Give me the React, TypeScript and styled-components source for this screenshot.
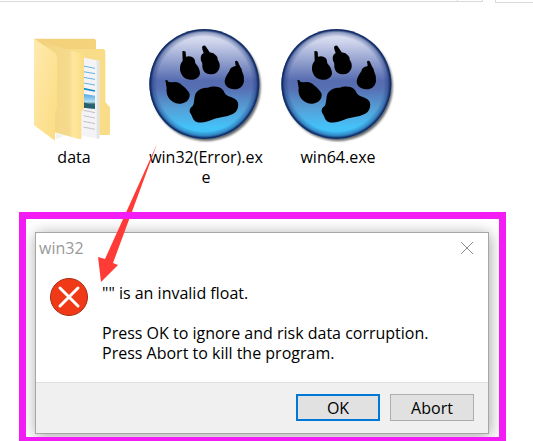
import React from "react";
import styled, { createGlobalStyle } from "styled-components";

const GlobalStyle = createGlobalStyle`
  * { box-sizing: border-box; }
  body {
    margin: 0;
    background: #fff;
    color: #000;
    font-family: "Open Sans", "Noto Sans", sans-serif;
    font-size: 16px;
    line-height: 20px;
    overflow: hidden;
  }
`;

const Page = styled.main`
  position: relative;
`;

const Toolbar = styled.header`
  display: flex;
  align-items: flex-start;
  gap: 12px;
`;

const AddressBox = styled.div`
  display: flex;
  justify-content: flex-end;
  flex: 1;
  height: 2px;
  border: solid #d9d9d9;
  border-width: 0 1px 1px 0;
`;

const AddressDivider = styled.div`
  width: 25px;
  border-left: 1px solid #d9d9d9;
`;

const SearchBox = styled.div`
  width: 38px;
  height: 3px;
  border: solid #d9d9d9;
  border-width: 0 0 1px 1px;
`;

const Files = styled.ul`
  display: grid;
  grid-template-columns: repeat(auto-fill, 132px);
  margin: 0;
  padding: 23px 8px 25px;
  list-style: none;
`;

const FileItem = styled.li`
  display: flex;
  flex-direction: column;
  align-items: center;
  gap: 3px;
`;

const FileIcon = styled.svg`
  width: 118px;
  height: 118px;
`;

const FileName = styled.span`
  width: 114px;
  text-align: center;
  word-break: break-all;
`;

const Highlight = styled.section`
  position: relative;
  margin: 0 27px 0 19px;
  padding: 20px 17px 7px 16px;

  &::after {
    content: "";
    position: absolute;
    inset: 0;
    z-index: 2;
    border: solid #f41cf4;
    border-width: 7px 7px 4px;
    pointer-events: none;
  }
`;

const Dialog = styled.div`
  border: 1px solid #a6a6a6;
  background: #fff;
  box-shadow: 1px 2px 14px rgba(0, 0, 0, 0.36);
  clip-path: inset(-13px -10px -3px -9px);
`;

const TitleBar = styled.div`
  display: flex;
  align-items: center;
  justify-content: space-between;
  height: 30px;
  padding: 0 14px 0 3px;
`;

const Title = styled.h1`
  margin: 0;
  color: #999;
  font-size: 16px;
  font-weight: 400;
`;

const CloseButton = styled.button`
  display: flex;
  padding: 0;
  border: 0;
  background: none;
`;

const Message = styled.div`
  display: flex;
  align-items: flex-start;
  gap: 13px;
  padding: 14px 13px 19px;
`;

const MessageText = styled.div`
  display: grid;
  gap: 20px;
  padding-top: 6px;
`;

const Paragraph = styled.p`
  margin: 0;
`;

const Actions = styled.footer`
  display: flex;
  justify-content: flex-end;
  gap: 10px;
  padding: 11px 14px 12px;
  border-top: 1px solid #dfdfdf;
  background: #f0f0f0;
`;

const ActionButton = styled.button<{ $primary?: boolean }>`
  width: 84px;
  height: 27px;
  padding: 0;
  border: ${(p) => (p.$primary ? "2px solid #0078d7" : "1px solid #adadad")};
  background: #e1e1e1;
  color: #000;
  font: inherit;
`;

const Pointer = styled.svg`
  position: absolute;
  top: 140px;
  left: 90px;
  z-index: 1;
  pointer-events: none;
`;

const FolderIcon = () => (
  <FileIcon viewBox="-15 18 354 354" aria-hidden="true">
    <defs>
      <linearGradient id="folderFront" x1="0" y1="0" x2="1" y2="1">
        <stop offset="0" stopColor="#ffeab0" />
        <stop offset="1" stopColor="#fbdc80" />
      </linearGradient>
      <linearGradient id="folderInner" x1="0" y1="0" x2="1" y2="0">
        <stop offset="0" stopColor="#f3d582" />
        <stop offset="0.62" stopColor="#f6da8d" />
        <stop offset="0.72" stopColor="#ffe79f" />
        <stop offset="1" stopColor="#fbdc85" />
      </linearGradient>
      <linearGradient id="photo" x1="0" y1="0" x2="0" y2="1">
        <stop offset="0" stopColor="#4aa5e2" />
        <stop offset="0.55" stopColor="#b9e1f4" />
        <stop offset="0.7" stopColor="#2f6470" />
        <stop offset="1" stopColor="#3d86ba" />
      </linearGradient>
    </defs>
    <path d="M42 56H222Q228 57 228 63V340L110 322L42 312Z" fill="#f3d27b" />
    <path d="M98 87H249Q256 88 256 95V246L270 262V341Q270 345 265 345H130Z" fill="#f9dc88" />
    <path d="M172 109L238 122V357L172 344Z" fill="#f4f4f6" />
    <path d="M238 122V357L230 355V121Z" fill="#e2e3e7" />
    <g fill="none" stroke="#62b4df" strokeWidth="3">
      <path d="M190 138L225 145M190 155L225 161M190 172L225 178M190 189L225 195" />
      <path d="M190 206L225 213" stroke="#168bc7" strokeWidth="5" />
    </g>
    <path d="M188 221L225 227V266L188 263Z" fill="url(#photo)" />
    <path d="M188 246L225 258V266L188 263Z" fill="#28606d" />
    <path d="M190 271L225 278M190 287L225 294M190 304L225 311M190 321L225 328" stroke="#bfc2c6" strokeWidth="3" />
    <path d="M107 340L132 347L108 357Z" fill="#f1f1f1" />
    <path d="M76 69L186 101Q192 103 192 108V265Q184 272 184 280V353Q183 359 176 357L76 329Z" fill="url(#folderInner)" />
    <path d="M42 56L106 99Q111 103 111 109V267Q105 274 105 282V362L44 317Q42 315 42 312Z" fill="url(#folderFront)" />
  </FileIcon>
);

const PawIcon = ({ id }: { id: string }) => (
  <FileIcon viewBox="21 18 354 354" aria-hidden="true">
    <defs>
      <linearGradient id={`${id}-fill`} x1="0" y1="0" x2="0" y2="1">
        <stop offset="0" stopColor="#e6e9f6" />
        <stop offset="0.12" stopColor="#cdd3eb" />
        <stop offset="0.47" stopColor="#566cb0" />
        <stop offset="0.54" stopColor="#566fb2" />
        <stop offset="0.72" stopColor="#559fd6" />
        <stop offset="0.9" stopColor="#43c3fa" />
        <stop offset="1" stopColor="#3fb9f4" />
      </linearGradient>
      <radialGradient id={`${id}-rim`}>
        <stop offset="0.86" stopColor="#173477" stopOpacity="0" />
        <stop offset="0.94" stopColor="#173477" stopOpacity="0.4" />
        <stop offset="0.98" stopColor="#132c66" />
        <stop offset="1" stopColor="#173066" />
      </radialGradient>
      <filter id={`${id}-shadow`}>
        <feGaussianBlur stdDeviation="3" />
      </filter>
    </defs>
    <circle cx="198" cy="199" r="164" fill="#000" opacity="0.6" filter={`url(#${id}-shadow)`} />
    <circle cx="193" cy="192" r="165" fill={`url(#${id}-fill)`} />
    <circle cx="193" cy="192" r="165" fill={`url(#${id}-rim)`} />
    <path d="M127 94Q132 91 137 95L138 110Q152 106 161 114Q166 119 166 130Q180 145 180 161C177 174 164 180 150 179C133 179 121 164 120 148C119 135 124 127 128 123Z" />
    <path d="M188 78Q194 74 198 80L209 97Q222 98 229 107Q234 112 233 119C239 127 241 136 238 146C233 157 224 164 211 163C196 163 186 151 187 136Q188 128 183 122Q179 106 191 99L187 88Q185 81 188 78Z" />
    <path d="M285 124Q291 120 294 126L301 141Q306 147 306 153Q314 169 312 184C309 200 298 209 282 208C266 207 254 198 254 184C255 171 263 162 268 154Q270 141 287 138Z" />
    <path d="M76 181Q82 178 86 186Q96 187 105 186Q119 187 125 195Q143 208 149 222C150 238 140 249 122 251C107 253 92 244 85 232C79 222 79 211 80 204Z" />
    <path d="M165 225C172 207 188 203 203 203C216 198 236 198 245 206C254 213 252 222 263 227C276 232 291 237 294 248C297 263 290 276 278 282C258 292 237 291 220 298C202 306 183 311 168 305C158 300 158 291 153 283C146 274 149 264 157 259C163 253 162 238 165 225Z" />
  </FileIcon>
);

const files = [
  { name: "data", icon: <FolderIcon /> },
  { name: "win32(Error).exe", icon: <PawIcon id="win32" /> },
  { name: "win64.exe", icon: <PawIcon id="win64" /> },
];

export default function App() {
  return (
    <Page>
      <GlobalStyle />
      <Toolbar>
        <AddressBox>
          <AddressDivider />
        </AddressBox>
        <SearchBox />
      </Toolbar>
      <Files>
        {files.map((file) => (
          <FileItem key={file.name}>
            {file.icon}
            <FileName>{file.name}</FileName>
          </FileItem>
        ))}
      </Files>
      <Highlight>
        <Dialog role="alertdialog" aria-labelledby="title" aria-describedby="message">
          <TitleBar>
            <Title id="title">win32</Title>
            <CloseButton type="button" aria-label="Close">
              <svg width="14" height="14" viewBox="0 0 14 14" stroke="#8c8c8c" fill="none">
                <path d="M1 1L13 13M13 1L1 13" />
              </svg>
            </CloseButton>
          </TitleBar>
          <Message>
            <svg width="40" height="40" viewBox="0 0 40 40" aria-hidden="true">
              <circle cx="20" cy="20" r="18.5" fill="#f03a17" stroke="#a92b14" />
              <path d="M11 11L29 29M29 11L11 29" stroke="#fff" strokeWidth="3" strokeLinecap="round" />
            </svg>
            <MessageText id="message">
              <Paragraph>"" is an invalid float.</Paragraph>
              <Paragraph>
                Press OK to ignore and risk data corruption.
                <br />
                Press Abort to kill the program.
              </Paragraph>
            </MessageText>
          </Message>
          <Actions>
            <ActionButton type="button" $primary>
              OK
            </ActionButton>
            <ActionButton type="button">Abort</ActionButton>
          </Actions>
        </Dialog>
      </Highlight>
      <Pointer width="70" height="145" viewBox="90 140 70 145" fill="#ff3b38" aria-hidden="true">
        <path d="M157 144L113 263L118 265L101 282L98 257L105 259Z" />
      </Pointer>
    </Page>
  );
}
